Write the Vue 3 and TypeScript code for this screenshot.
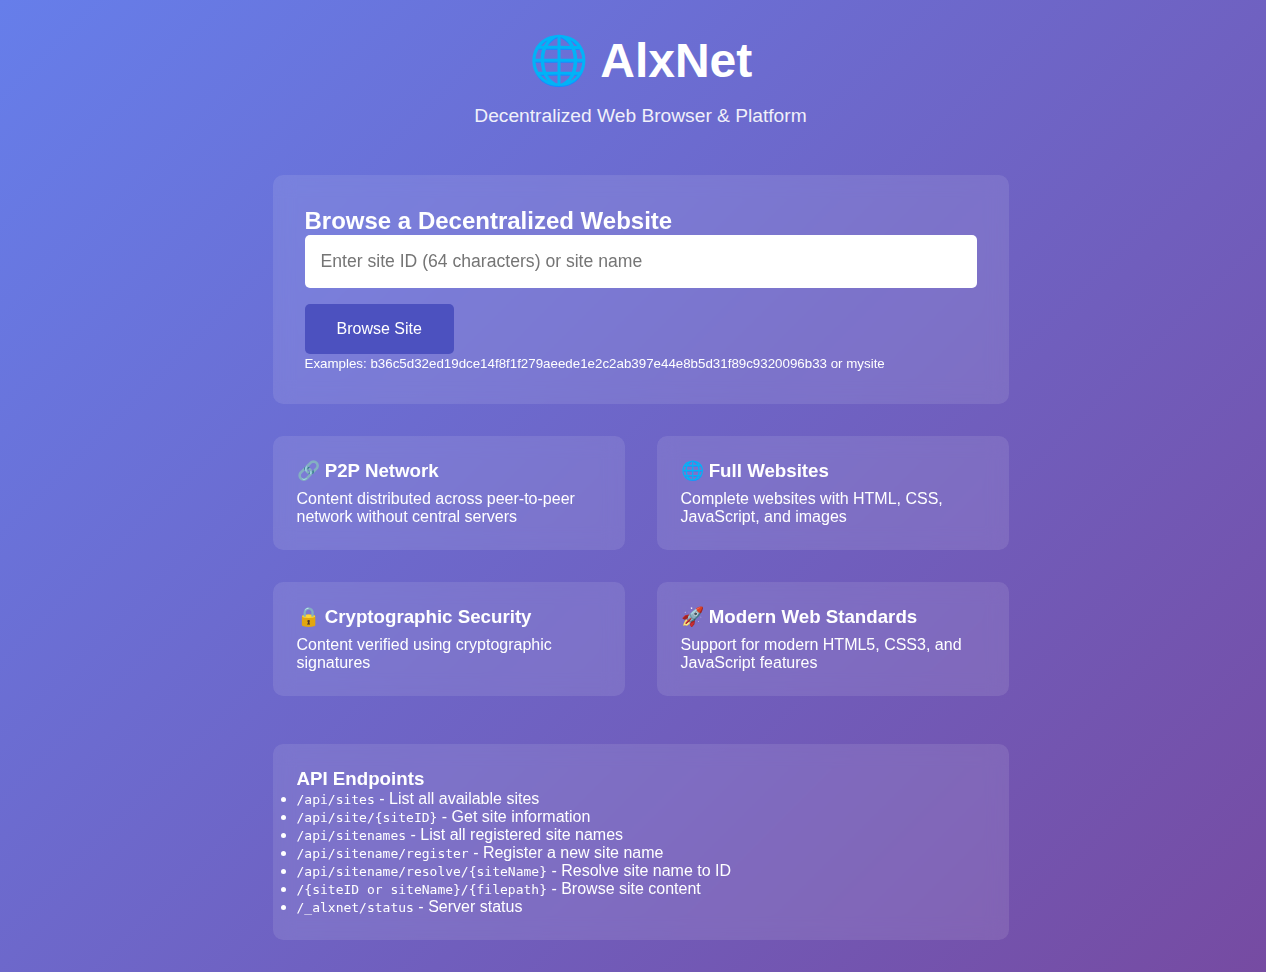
<script setup lang="ts">
import { ref } from 'vue'

interface Feature {
  icon: string
  title: string
  text: string
}

interface Endpoint {
  path: string
  text: string
}

const site = ref('')

const features: Feature[] = [
  { icon: '🔗', title: 'P2P Network', text: 'Content distributed across peer-to-peer network without central servers' },
  { icon: '🌐', title: 'Full Websites', text: 'Complete websites with HTML, CSS, JavaScript, and images' },
  { icon: '🔒', title: 'Cryptographic Security', text: 'Content verified using cryptographic signatures' },
  { icon: '🚀', title: 'Modern Web Standards', text: 'Support for modern HTML5, CSS3, and JavaScript features' },
]

const endpoints: Endpoint[] = [
  { path: '/api/sites', text: 'List all available sites' },
  { path: '/api/site/{siteID}', text: 'Get site information' },
  { path: '/api/sitenames', text: 'List all registered site names' },
  { path: '/api/sitename/register', text: 'Register a new site name' },
  { path: '/api/sitename/resolve/{siteName}', text: 'Resolve site name to ID' },
  { path: '/{siteID or siteName}/{filepath}', text: 'Browse site content' },
  { path: '/_alxnet/status', text: 'Server status' },
]
</script>

<template>
  <div class="page">
    <div class="container">
      <header class="header">
        <h1>🌐 AlxNet</h1>
        <p>Decentralized Web Browser &amp; Platform</p>
      </header>

      <section class="browse">
        <h2>Browse a Decentralized Website</h2>
        <form @submit.prevent>
          <input v-model="site" type="text" placeholder="Enter site ID (64 characters) or site name" />
          <button type="submit">Browse Site</button>
        </form>
        <p class="examples">
          <small>Examples: b36c5d32ed19dce14f8f1f279aeede1e2c2ab397e44e8b5d31f89c9320096b33 or mysite</small>
        </p>
      </section>

      <section class="features">
        <article v-for="f in features" :key="f.title" class="feature">
          <h3>{{ f.icon }} {{ f.title }}</h3>
          <p>{{ f.text }}</p>
        </article>
      </section>

      <section class="api">
        <h3>API Endpoints</h3>
        <ul>
          <li v-for="e in endpoints" :key="e.path"><code>{{ e.path }}</code> - {{ e.text }}</li>
        </ul>
      </section>
    </div>
  </div>
</template>

<style>
body {
  margin: 0;
}
</style>

<style scoped>
* {
  margin: 0;
  padding: 0;
  box-sizing: border-box;
}

.page {
  min-height: 100vh;
  background: linear-gradient(135deg, #667eea 0%, #764ba2 100%);
  color: #fff;
  font-family: "Liberation Sans", Arial, sans-serif;
}

.container {
  width: 800px;
  margin-left: 240.5px;
  padding: 32px;
}

.header {
  text-align: center;
  margin-bottom: 48px;
}

.header h1 {
  font-size: 48px;
  margin-bottom: 16px;
}

.header p {
  font-size: 19.2px;
  opacity: 0.9;
}

.browse,
.feature,
.api {
  background: rgba(255, 255, 255, 0.1);
  border-radius: 10px;
  backdrop-filter: blur(10px);
}

.browse {
  padding: 32px;
  margin-bottom: 32px;
}

input {
  display: block;
  width: 100%;
  padding: 16px;
  border: none;
  border-radius: 5px;
  font-family: inherit;
  font-size: 17.6px;
  margin-bottom: 16px;
}

button {
  display: block;
  background: #4c51bf;
  color: #fff;
  border: none;
  padding: 16px 32px;
  border-radius: 5px;
  font-family: inherit;
  font-size: 16px;
  cursor: pointer;
}

.features {
  display: grid;
  grid-template-columns: repeat(2, 1fr);
  gap: 32px;
}

.feature {
  padding: 24px;
}

.feature h3 {
  margin-bottom: 8px;
}

.api {
  padding: 24px;
  margin-top: 48px;
}
</style>
